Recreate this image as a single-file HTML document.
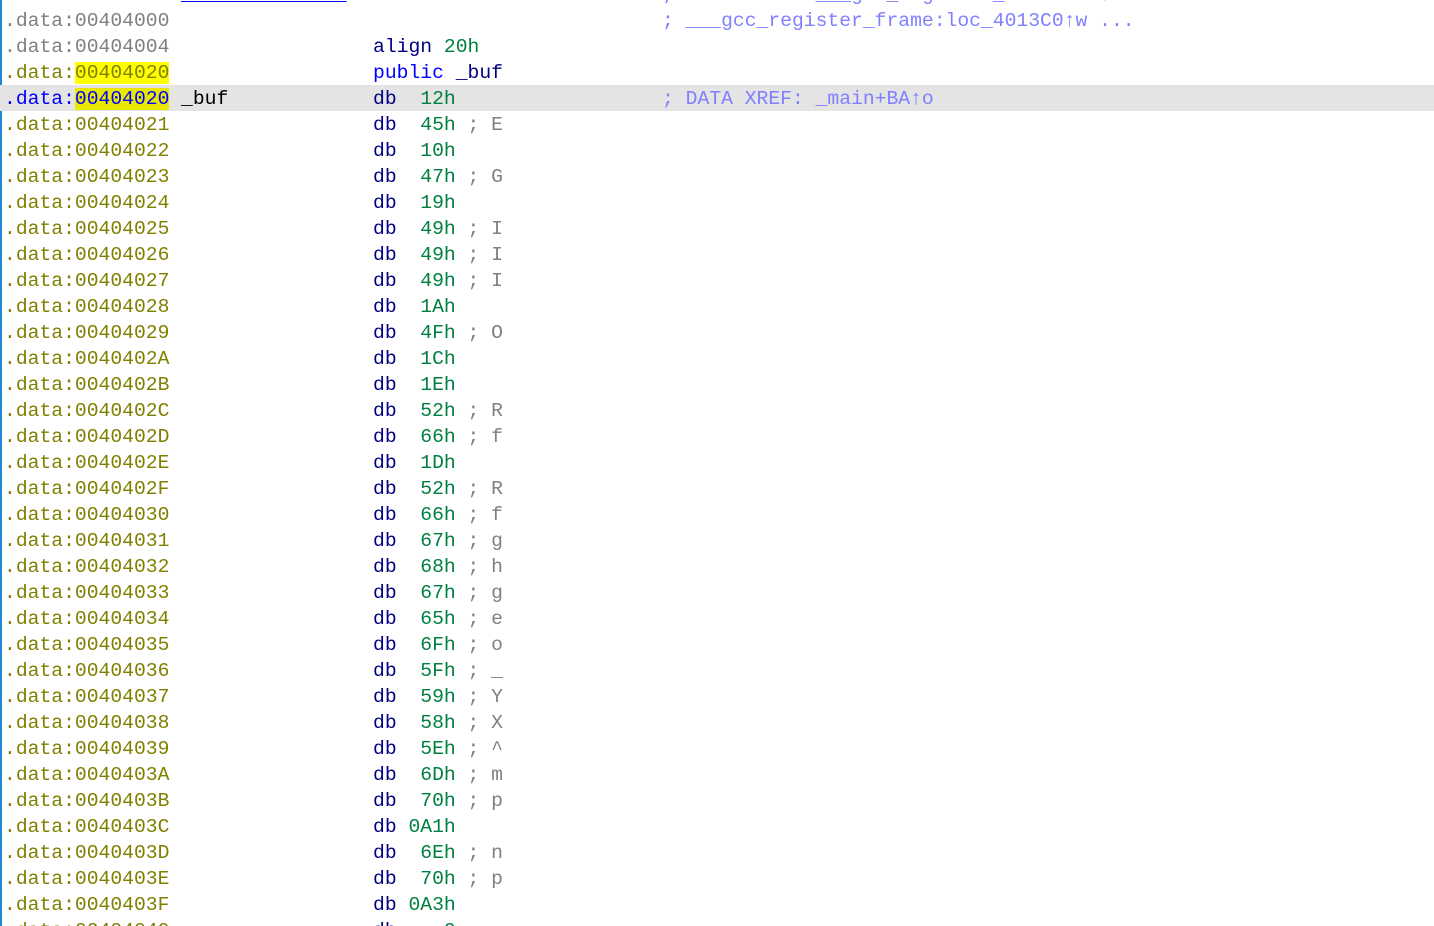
<!DOCTYPE html>
<html><head><meta charset="utf-8"><style>
html,body{margin:0;padding:0;background:#fff;width:1434px;height:926px;overflow:hidden;position:relative}
body{font-family:"Liberation Mono",monospace;font-size:19.7px}
.bar{position:absolute;left:0;top:0;width:2px;height:926px;background:#1e88d8}
.r{position:absolute;left:0;width:1434px;height:26px;line-height:26px;white-space:pre}
.r > span{position:absolute;top:1px}
.hl{background:#e4e4e4}
.a{left:4px;color:#808080}
.ao{left:4px;color:#808000}
.ab{left:4px;color:#0000ff}
.y{background:#ffff00}
.l{left:181px;color:#000080}
.i{left:373px;color:#000080}
.n{color:#008040}
.c{color:#808080}
.x{left:662px;color:#8080ff}
.u{color:#0000ff;text-decoration:underline}
</style></head><body>
<div class="bar"></div>
<div class="r" style="top:-19px"><span class="a">.data:00404000</span><span class="l"><span class="u">__data_start__</span></span><span class="i">dd <span class="n">0</span></span><span class="x">; DATA XREF: ___gcc_register_frame+10↑r</span></div>
<div class="r" style="top:7px"><span class="a">.data:00404000</span><span class="x">; ___gcc_register_frame:loc_4013C0↑w ...</span></div>
<div class="r" style="top:33px"><span class="a">.data:00404004</span><span class="i">align <span class="n">20h</span></span></div>
<div class="r" style="top:59px"><span class="ao">.data:<span class="y">00404020</span></span><span class="i" style="color:#0000ff">public <span style="color:#000080">_buf</span></span></div>
<div class="r hl" style="top:85px"><span class="ab">.data:<span style="background:#e8e800">00404020</span></span><span class="l" style="color:#000000">_buf</span><span class="i">db  <span class="n">12h</span></span><span class="x">; DATA XREF: _main+BA↑o</span></div>
<div class="r" style="top:111px"><span class="ao">.data:00404021</span><span class="i">db  <span class="n">45h</span> <span class="c">; E</span></span></div>
<div class="r" style="top:137px"><span class="ao">.data:00404022</span><span class="i">db  <span class="n">10h</span></span></div>
<div class="r" style="top:163px"><span class="ao">.data:00404023</span><span class="i">db  <span class="n">47h</span> <span class="c">; G</span></span></div>
<div class="r" style="top:189px"><span class="ao">.data:00404024</span><span class="i">db  <span class="n">19h</span></span></div>
<div class="r" style="top:215px"><span class="ao">.data:00404025</span><span class="i">db  <span class="n">49h</span> <span class="c">; I</span></span></div>
<div class="r" style="top:241px"><span class="ao">.data:00404026</span><span class="i">db  <span class="n">49h</span> <span class="c">; I</span></span></div>
<div class="r" style="top:267px"><span class="ao">.data:00404027</span><span class="i">db  <span class="n">49h</span> <span class="c">; I</span></span></div>
<div class="r" style="top:293px"><span class="ao">.data:00404028</span><span class="i">db  <span class="n">1Ah</span></span></div>
<div class="r" style="top:319px"><span class="ao">.data:00404029</span><span class="i">db  <span class="n">4Fh</span> <span class="c">; O</span></span></div>
<div class="r" style="top:345px"><span class="ao">.data:0040402A</span><span class="i">db  <span class="n">1Ch</span></span></div>
<div class="r" style="top:371px"><span class="ao">.data:0040402B</span><span class="i">db  <span class="n">1Eh</span></span></div>
<div class="r" style="top:397px"><span class="ao">.data:0040402C</span><span class="i">db  <span class="n">52h</span> <span class="c">; R</span></span></div>
<div class="r" style="top:423px"><span class="ao">.data:0040402D</span><span class="i">db  <span class="n">66h</span> <span class="c">; f</span></span></div>
<div class="r" style="top:449px"><span class="ao">.data:0040402E</span><span class="i">db  <span class="n">1Dh</span></span></div>
<div class="r" style="top:475px"><span class="ao">.data:0040402F</span><span class="i">db  <span class="n">52h</span> <span class="c">; R</span></span></div>
<div class="r" style="top:501px"><span class="ao">.data:00404030</span><span class="i">db  <span class="n">66h</span> <span class="c">; f</span></span></div>
<div class="r" style="top:527px"><span class="ao">.data:00404031</span><span class="i">db  <span class="n">67h</span> <span class="c">; g</span></span></div>
<div class="r" style="top:553px"><span class="ao">.data:00404032</span><span class="i">db  <span class="n">68h</span> <span class="c">; h</span></span></div>
<div class="r" style="top:579px"><span class="ao">.data:00404033</span><span class="i">db  <span class="n">67h</span> <span class="c">; g</span></span></div>
<div class="r" style="top:605px"><span class="ao">.data:00404034</span><span class="i">db  <span class="n">65h</span> <span class="c">; e</span></span></div>
<div class="r" style="top:631px"><span class="ao">.data:00404035</span><span class="i">db  <span class="n">6Fh</span> <span class="c">; o</span></span></div>
<div class="r" style="top:657px"><span class="ao">.data:00404036</span><span class="i">db  <span class="n">5Fh</span> <span class="c">; _</span></span></div>
<div class="r" style="top:683px"><span class="ao">.data:00404037</span><span class="i">db  <span class="n">59h</span> <span class="c">; Y</span></span></div>
<div class="r" style="top:709px"><span class="ao">.data:00404038</span><span class="i">db  <span class="n">58h</span> <span class="c">; X</span></span></div>
<div class="r" style="top:735px"><span class="ao">.data:00404039</span><span class="i">db  <span class="n">5Eh</span> <span class="c">; ^</span></span></div>
<div class="r" style="top:761px"><span class="ao">.data:0040403A</span><span class="i">db  <span class="n">6Dh</span> <span class="c">; m</span></span></div>
<div class="r" style="top:787px"><span class="ao">.data:0040403B</span><span class="i">db  <span class="n">70h</span> <span class="c">; p</span></span></div>
<div class="r" style="top:813px"><span class="ao">.data:0040403C</span><span class="i">db <span class="n">0A1h</span></span></div>
<div class="r" style="top:839px"><span class="ao">.data:0040403D</span><span class="i">db  <span class="n">6Eh</span> <span class="c">; n</span></span></div>
<div class="r" style="top:865px"><span class="ao">.data:0040403E</span><span class="i">db  <span class="n">70h</span> <span class="c">; p</span></span></div>
<div class="r" style="top:891px"><span class="ao">.data:0040403F</span><span class="i">db <span class="n">0A3h</span></span></div>
<div class="r" style="top:917px"><span class="ao">.data:00404040</span><span class="i">db    <span class="n">0</span></span></div>
</body></html>
